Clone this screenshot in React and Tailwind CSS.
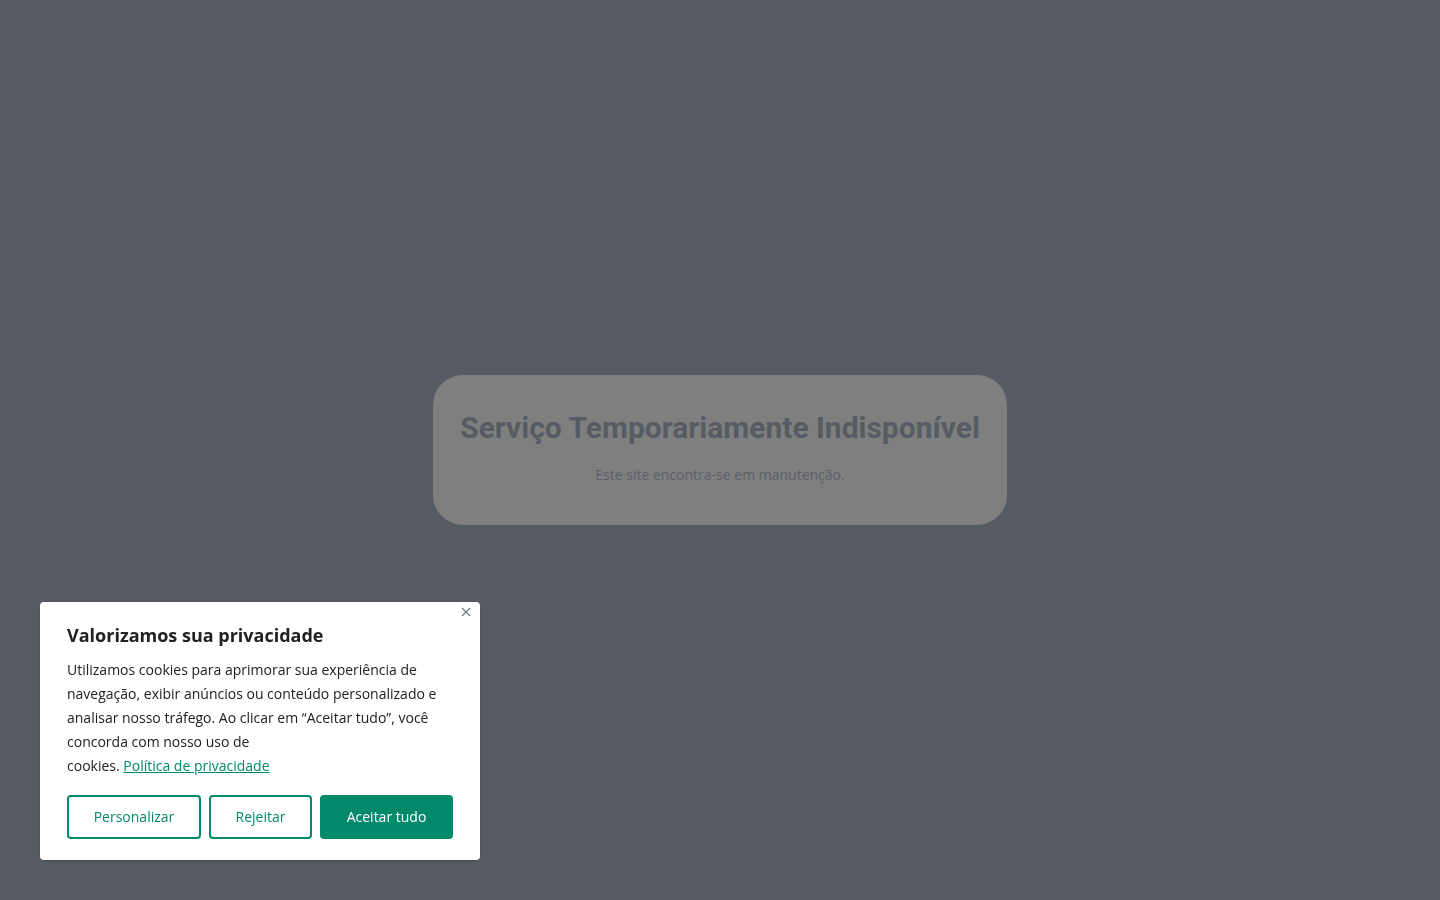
export default function App() {
  return (
    <div className="relative flex h-[900px] w-full items-center justify-center bg-[#565b63]" style={{ fontFamily: '"Open Sans", sans-serif' }}>
      <div className="flex h-[150px] w-[574px] flex-col items-center rounded-[30px] bg-[#7f7f7f] pt-[34px]">
        <h1 className="text-[30px] font-bold leading-[38px] text-[#575b63]" style={{ fontFamily: 'Roboto, sans-serif' }}>
          Serviço Temporariamente Indisponível
        </h1>
        <p className="mt-[18px] text-sm text-[#5c6068]">Este site encontra-se em manutenção.</p>
      </div>

      <div className="fixed bottom-[40px] left-[40px] w-[440px] rounded bg-white px-[27px] pb-[21px] pt-[20px] shadow">
        <button className="absolute right-[8px] top-[4px] text-[#6b7280]" aria-label="Fechar">
          <svg width="12" height="12" viewBox="0 0 12 12" stroke="currentColor" strokeWidth="1.1">
            <path d="M2 2l8 8M10 2l-8 8" />
          </svg>
        </button>
        <h2 className="text-lg font-bold leading-[26px] text-[#212121]">Valorizamos sua privacidade</h2>
        <p className="mt-[10px] text-sm leading-6 text-[#212121]">
          Utilizamos cookies para aprimorar sua experiência de navegação, exibir anúncios ou conteúdo personalizado e analisar nosso tráfego. Ao clicar em “Aceitar tudo”, você concorda com nosso uso de
          <br />
          cookies.{" "}
          <a href="#" className="text-[#00896b] underline">Política de privacidade</a>
        </p>
        <div className="mt-[17px] flex gap-2">
          <button className="h-[44px] w-[134px] rounded-sm border-2 border-[#00896b] text-sm text-[#00896b]">Personalizar</button>
          <button className="h-[44px] w-[103px] rounded-sm border-2 border-[#00896b] text-sm text-[#00896b]">Rejeitar</button>
          <button className="h-[44px] w-[133px] rounded-sm border-2 border-[#00896b] bg-[#00896b] text-sm text-white">Aceitar tudo</button>
        </div>
      </div>
    </div>
  );
}
